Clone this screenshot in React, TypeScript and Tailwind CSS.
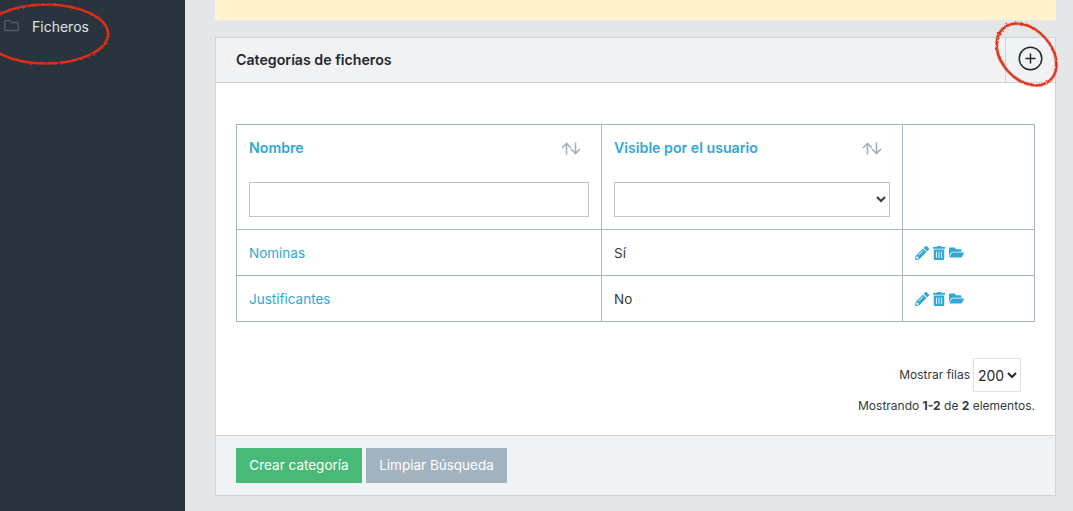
import { CirclePlus } from 'lucide-react'
import { FaFolderOpen, FaPencilAlt, FaRegFolder, FaTrashAlt } from 'react-icons/fa'

const rows = [
  { name: 'Nominas', visible: 'Sí' },
  { name: 'Justificantes', visible: 'No' },
]

function SortIcon() {
  return (
    <svg width="20" height="13" viewBox="0 0 20 13" fill="none" stroke="#a9afb3" strokeWidth="1.6" className="mt-[2px] shrink-0">
      <path d="M5.5 12.5V1.5M1 6l4.5-4.5L10 6" />
      <path d="M14.5 .5v11M10 7l4.5 4.5L19 7" />
    </svg>
  )
}

function RowActions() {
  return (
    <div className="flex items-center gap-[3px] text-[#2fa8d5]">
      <FaPencilAlt size={14} />
      <FaTrashAlt size={14} />
      <FaFolderOpen size={15} />
    </div>
  )
}

export default function App() {
  return (
    <div className="relative flex h-[511px] w-[1073px] overflow-hidden bg-[#e4e6e8] font-['Inter',sans-serif] text-[13.5px] text-[#333b42]">
      <aside className="w-[185px] shrink-0 bg-[#29343f]">
        <div className="flex items-center pl-[4px] pt-[18px] text-[#dfe3e7]">
          <FaRegFolder size={15} className="-mt-[4px] text-[#4f5b66]" />
          <span className="ml-[13px] text-[14px] leading-[18px]">Ficheros</span>
        </div>
      </aside>

      <main className="flex-1 pl-[30px] pr-[17px]">
        <div className="h-[20px] w-[841px] bg-[#fff2cc]" />

        <section className="mt-[17px] flex h-[459px] w-[841px] flex-col border border-[#cfd4d8] bg-white">
          <header className="flex h-[45px] shrink-0 items-center justify-between border-b border-[#cfd4d8] bg-[#f0f2f4]">
            <h2 className="pl-[20px] text-[14.2px] font-semibold text-[#23282d]">Categorías de ficheros</h2>
            <div className="flex h-full w-[50px] items-center justify-center border-l border-[#cfd4d8]">
              <CirclePlus size={27} strokeWidth={1.3} className="-mt-[3px] text-[#22282e]" />
            </div>
          </header>

          <div className="flex-1 px-[20px] pt-[41px]">
            <table className="w-[798px] table-fixed border-collapse border border-[#a5b6bb]">
              <colgroup>
                <col className="w-[365px]" />
                <col className="w-[301px]" />
                <col className="w-[132px]" />
              </colgroup>
              <thead>
                <tr className="h-[105px]">
                  <th className="border border-[#a5b6bb] px-[12px] text-left align-top font-normal">
                    <div className="flex items-center justify-between pr-[8px] pt-[12px]">
                      <span className="text-[14.2px] font-semibold text-[#2fa8d5]">Nombre</span>
                      <SortIcon />
                    </div>
                    <input className="mt-[24px] block h-[35px] w-full border border-[#bcc5c9] bg-white" />
                  </th>
                  <th className="border border-[#a5b6bb] px-[12px] text-left align-top font-normal">
                    <div className="flex items-center justify-between pr-[8px] pt-[12px]">
                      <span className="text-[14.2px] font-semibold text-[#2fa8d5]">Visible por el usuario</span>
                      <SortIcon />
                    </div>
                    <select className="mt-[24px] block h-[35px] w-full border border-[#bcc5c9] bg-white" />
                  </th>
                  <th className="border border-[#a5b6bb]" />
                </tr>
              </thead>
              <tbody>
                {rows.map((row) => (
                  <tr key={row.name} className="h-[46px]">
                    <td className="border border-[#a5b6bb] px-[12px] pt-[2px] text-[#2fa8d5]">{row.name}</td>
                    <td className="border border-[#a5b6bb] px-[12px] pt-[2px]">{row.visible}</td>
                    <td className="border border-[#a5b6bb] px-[12px]">
                      <RowActions />
                    </td>
                  </tr>
                ))}
              </tbody>
            </table>

            <div className="mt-[36px] flex items-center justify-end gap-[3px] pr-[14px] text-[12px]">
              <span>Mostrar filas</span>
              <select className="h-[34px] w-[48px] border border-[#e0e3e5] bg-white text-[14px] text-[#22282e]">
                <option>200</option>
              </select>
            </div>
            <p className="mt-[5px] text-right text-[12px]">
              Mostrando <b>1-2</b> de <b>2</b> elementos.
            </p>
          </div>

          <footer className="flex h-[60px] shrink-0 items-start gap-[4px] border-t border-[#cfd4d8] bg-[#f0f2f4] px-[20px] pt-[12px] text-[13.5px] text-white">
            <button className="h-[35px] w-[126px] bg-[#48b976]">Crear categoría</button>
            <button className="h-[35px] w-[141px] bg-[#a2b3bf]">Limpiar Búsqueda</button>
          </footer>
        </section>
      </main>

      {/* hand drawn marks on the screenshot */}
      <svg className="absolute left-0 top-0" width="1073" height="511" fill="none">
        <defs>
          <filter id="rough" x="-10%" y="-10%" width="120%" height="120%">
            <feTurbulence type="fractalNoise" baseFrequency="0.35" numOctaves="2" seed="4" />
            <feDisplacementMap in="SourceGraphic" scale="2.5" />
          </filter>
        </defs>
        <g filter="url(#rough)" stroke="#dd2f17" strokeWidth="2.6">
          <ellipse cx="46" cy="34" rx="62" ry="29.5" />
          <ellipse cx="1026.5" cy="54.5" rx="35" ry="25" transform="rotate(48 1026.5 54.5)" />
        </g>
      </svg>
    </div>
  )
}
